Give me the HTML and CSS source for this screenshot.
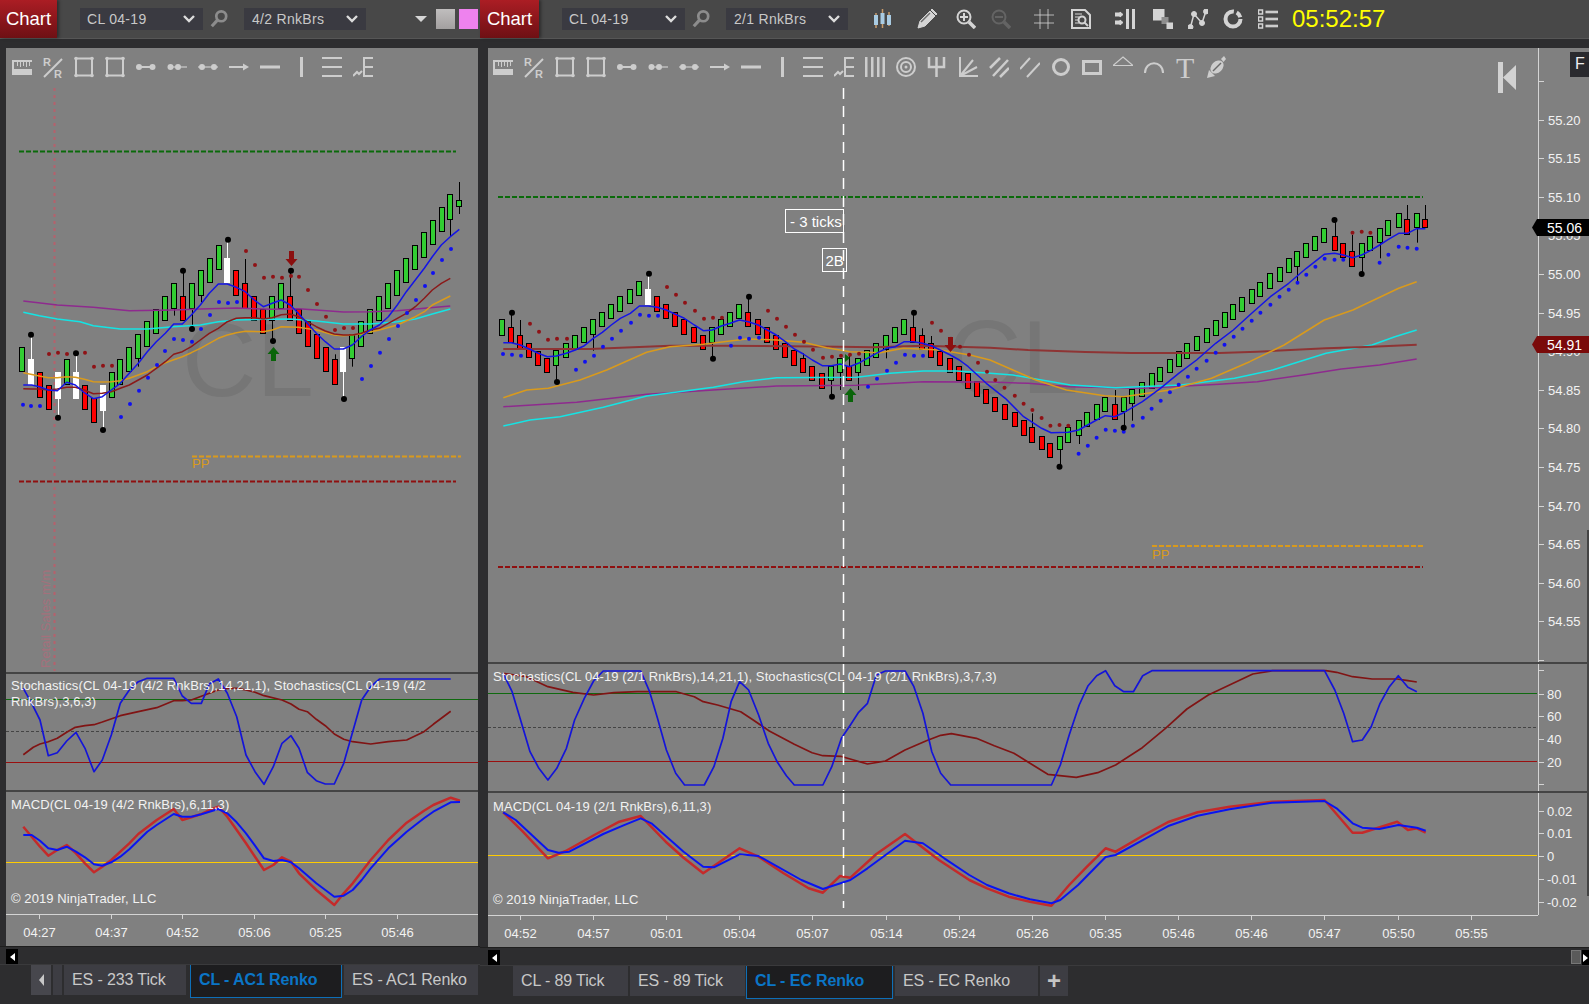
FILE: index.html

```html
<!DOCTYPE html>
<html lang="en">
<head>
  <meta charset="UTF-8" />
  <title>Chart</title>
  <link rel="stylesheet" href="styles.css">
</head>
<body>
  <svg class="defs" aria-hidden="true">
    <symbol id="t-ruler" viewBox="0 0 20 24"><path d="M0 5h20v2h-2v4h-1V7h-2v5h-1V7h-2v4h-1V7H9v5H8V7H6v4H5V7H2v7h18v6H0z"/></symbol>
    <symbol id="t-rect" viewBox="0 0 20 24"><rect x="2" y="3.500" width="16" height="17" class="st2"/><circle cx="2" cy="3.500" r="1.800"/><circle cx="18" cy="3.500" r="1.800"/><circle cx="2" cy="20.500" r="1.800"/><circle cx="18" cy="20.500" r="1.800"/></symbol>
    <symbol id="t-ray1" viewBox="0 0 20 24"><path d="M3 12h14" class="st2"/><circle cx="3" cy="12" r="3"/><circle cx="16.500" cy="12" r="3"/></symbol>
    <symbol id="t-ray2" viewBox="0 0 20 24"><path d="M3 12h17" class="st1"/><circle cx="3.500" cy="12" r="3"/><circle cx="11" cy="12" r="3"/></symbol>
    <symbol id="t-ray3" viewBox="0 0 20 24"><path d="M0 12h20" class="st1"/><circle cx="4" cy="12" r="3"/><circle cx="16" cy="12" r="3"/></symbol>
    <symbol id="t-arrow" viewBox="0 0 20 24"><path d="M0 12h16" class="st2"/><path d="M14 8.500 20 12l-6 3.500z"/></symbol>
    <symbol id="t-line" viewBox="0 0 20 24"><rect y="10.500" width="20" height="3"/></symbol>
    <symbol id="t-vert" viewBox="0 0 20 24"><rect x="9" y="2" width="3" height="20"/></symbol>
    <symbol id="t-lines" viewBox="0 0 20 24"><rect y="2" width="20" height="2"/><rect y="11" width="20" height="2"/><rect y="20" width="20" height="2"/></symbol>
    <symbol id="t-fib" viewBox="0 0 20 24"><path d="M11 3v18M10 3h10M10 12h10M10 21h10" class="st2"/><path d="M0 21l4-4 2 2 3-3" class="st2"/></symbol>
    <symbol id="t-bars" viewBox="0 0 20 24"><rect x="0" y="2" width="2.500" height="20"/><rect x="6" y="2" width="2.500" height="20"/><rect x="12" y="2" width="2.500" height="20"/><rect x="17.500" y="2" width="2.500" height="20"/></symbol>
    <symbol id="t-target" viewBox="0 0 20 24"><circle cx="10" cy="12" r="9" class="st2"/><circle cx="10" cy="12" r="5" class="st2"/><circle cx="10" cy="12" r="1.500"/></symbol>
    <symbol id="t-fork" viewBox="0 0 20 24"><path d="M2 2v10h15V2M9.500 2v20" class="st25"/></symbol>
    <symbol id="t-fan" viewBox="0 0 20 24"><path d="M2 2v19h18M2 21 15 5M2 21l17-9" class="st2"/></symbol>
    <symbol id="t-hatch" viewBox="0 0 20 24"><path d="M1 13 11 3M4 21 19 5M11 22 20 13" class="st25"/></symbol>
    <symbol id="t-slash" viewBox="0 0 20 24"><path d="M0 14 10 3M7 22 20 8" class="st2"/></symbol>
    <symbol id="t-circle" viewBox="0 0 20 24"><circle cx="10" cy="12" r="7.500" class="st3"/></symbol>
    <symbol id="t-box" viewBox="0 0 20 24"><rect x="1.500" y="6.500" width="17" height="12" class="st3"/></symbol>
    <symbol id="t-tri" viewBox="0 0 20 24"><path d="M10 2 20 10.500H0z" class="st1"/></symbol>
    <symbol id="t-arc" viewBox="0 0 20 24"><path d="M1 18C1 5 19 5 19 18" class="st2"/></symbol>
    <symbol id="t-brush" viewBox="0 0 20 24"><ellipse cx="11" cy="12" rx="7.500" ry="5.500" transform="rotate(-45 11 12)"/><path d="M1 23 3 15 9 21z"/><path d="M15 4 18 1 20 4 17.500 7z"/><path d="M7 16 15 8" class="st-bg"/></symbol>

    <symbol id="b-search" viewBox="0 0 20 20"><circle cx="12.500" cy="7" r="5.500" class="st3"/><path d="M8.500 11 2 18" class="st35"/></symbol>
    <symbol id="b-candles" viewBox="0 0 20 20"><path d="M3 4v15M9.500 0v19M16 3v14" class="st-wick"/><rect x="1" y="6" width="4" height="10" class="fill-blue"/><rect x="7.500" y="4" width="4" height="11" class="fill-blue"/><rect x="14" y="6" width="4" height="10" class="fill-blue"/></symbol>
    <symbol id="b-pencil" viewBox="0 0 20 20"><path d="M1 19 3 12 13 2 18 7 8 17zM15 0l5 5-1 1-5-5z"/><path d="M4 13 13 4" class="st-bg"/></symbol>
    <symbol id="b-plus" viewBox="0 0 20 20"><circle cx="8" cy="8" r="6.500" class="st2"/><path d="M8 4v8M4 8h8" class="st2"/><path d="M13 13l6 6" class="st35"/></symbol>
    <symbol id="b-minus" viewBox="0 0 20 20"><circle cx="8" cy="8" r="6.500" class="st2"/><path d="M4 8h8" class="st2"/><path d="M13 13l6 6" class="st35"/></symbol>
    <symbol id="b-grid" viewBox="0 0 20 20"><path d="M6 0v20M14 0v20M0 6h20M0 14h20" class="st-thin"/></symbol>
    <symbol id="b-doc" viewBox="0 0 20 20"><path d="M1 1h13l5 5v13H1z" class="st2"/><path d="M4 5h7M4 8h4M4 11h3M4 14h4" class="st1"/><circle cx="11" cy="11" r="3.500" class="st2"/><path d="M13.500 13.500 17 17" class="st2"/></symbol>
    <symbol id="b-split" viewBox="0 0 20 20"><rect x="0" y="4" width="5" height="3"/><rect x="0" y="12" width="5" height="3"/><path d="M5 3l3 2.500-3 2.500zM5 11l3 2.500-3 2.500z"/><rect x="11.500" y="0" width="2" height="20"/><rect x="17.500" y="0" width="2" height="20"/></symbol>
    <symbol id="b-layers" viewBox="0 0 20 20"><rect x="0" y="0" width="11" height="11"/><rect x="8.500" y="8" width="7" height="7" class="fill-dim"/><rect x="14" y="14" width="6" height="6"/></symbol>
    <symbol id="b-nodes" viewBox="0 0 20 20"><path d="M2.500 18 6 5l8 9 4-12" class="st15"/><circle cx="2.500" cy="18" r="2.500"/><circle cx="6" cy="5" r="2.500"/><circle cx="14" cy="14" r="2.500"/><circle cx="18" cy="2.500" r="2.500"/></symbol>
    <symbol id="b-ring" viewBox="0 0 20 20"><circle cx="10" cy="10" r="7.500" class="st4" stroke-dasharray="36 3 6 2"/></symbol>
    <symbol id="b-list" viewBox="0 0 20 20"><rect x="0.500" y="1" width="4" height="4" class="st15"/><rect x="0.500" y="8" width="4" height="4" class="st15"/><rect x="0.500" y="15" width="4" height="4" class="st15"/><rect x="8" y="2.200" width="12" height="1.600"/><rect x="8" y="9.200" width="12" height="1.600"/><rect x="8" y="16.200" width="12" height="1.600"/></symbol>
  </svg>

  <div class="windows">
    <section class="win win-left">
      <header class="topbar">
        <div class="chart-btn">Chart</div>
        <div class="combo combo-first">CL 04-19<svg class="chev" viewBox="0 0 12 8"><path d="M1 1l5 5 5-5"/></svg></div>
        <svg class="search"><use href="#b-search"/></svg>
        <div class="combo combo-second">4/2 RnkBrs<svg class="chev" viewBox="0 0 12 8"><path d="M1 1l5 5 5-5"/></svg></div>
        <div class="caret"></div>
        <div class="swatch swatch-grey"></div>
        <div class="swatch swatch-pink"></div>
      </header>
      <div class="chart">
        <div class="pane pane-main">
          <svg class="plot" id="left-main"></svg>
          <div class="tools">
            <svg class="tool"><use href="#t-ruler"/></svg>
            <svg class="tool" viewBox="0 0 20 24"><text x="0" y="11" class="sym-r">R</text><text x="11" y="23" class="sym-r">R</text><path d="M1 22 19 4" class="st2"/></svg>
            <svg class="tool"><use href="#t-rect"/></svg>
            <svg class="tool"><use href="#t-rect"/></svg>
            <svg class="tool"><use href="#t-ray1"/></svg>
            <svg class="tool"><use href="#t-ray2"/></svg>
            <svg class="tool"><use href="#t-ray3"/></svg>
            <svg class="tool"><use href="#t-arrow"/></svg>
            <svg class="tool"><use href="#t-line"/></svg>
            <svg class="tool"><use href="#t-vert"/></svg>
            <svg class="tool"><use href="#t-lines"/></svg>
            <svg class="tool"><use href="#t-fib"/></svg>
          </div>
        </div>
        <div class="pane pane-stoch">
          <svg class="plot" id="left-stoch"></svg>
          <div class="legend legend-wrap">Stochastics(CL 04-19 (4/2 RnkBrs),14,21,1), Stochastics(CL 04-19 (4/2 RnkBrs),3,6,3)</div>
        </div>
        <div class="pane pane-macd">
          <svg class="plot" id="left-macd"></svg>
          <div class="legend">MACD(CL 04-19 (4/2 RnkBrs),6,11,3)</div>
          <div class="copy">© 2019 NinjaTrader, LLC</div>
        </div>
        <div class="pane pane-time"><svg class="plot" id="left-time"></svg></div>
      </div>
      <div class="hbar"><div class="hbar-btn"><span class="tri-left"></span></div></div>
      <nav class="tabs">
        <div class="tab tab-arrow"><span class="tri-left"></span></div>
        <div class="tab tab-stub"></div>
        <div class="tab w122">ES - 233 Tick</div>
        <div class="tab active w152">CL - AC1 Renko</div>
        <div class="tab w134">ES - AC1 Renko</div>
      </nav>
    </section>

    <section class="win win-right">
      <header class="topbar">
        <div class="chart-btn">Chart</div>
        <div class="combo combo-first">CL 04-19<svg class="chev" viewBox="0 0 12 8"><path d="M1 1l5 5 5-5"/></svg></div>
        <svg class="search"><use href="#b-search"/></svg>
        <div class="combo combo-second">2/1 RnkBrs<svg class="chev" viewBox="0 0 12 8"><path d="M1 1l5 5 5-5"/></svg></div>
        <svg class="btn m25"><use href="#b-candles"/></svg>
        <svg class="btn m24"><use href="#b-pencil"/></svg>
        <svg class="btn m19"><use href="#b-plus"/></svg>
        <svg class="btn off"><use href="#b-minus"/></svg>
        <svg class="btn m23"><use href="#b-grid"/></svg>
        <svg class="btn m17"><use href="#b-doc"/></svg>
        <svg class="btn m24"><use href="#b-split"/></svg>
        <svg class="btn m18"><use href="#b-layers"/></svg>
        <svg class="btn"><use href="#b-nodes"/></svg>
        <svg class="btn"><use href="#b-ring"/></svg>
        <svg class="btn"><use href="#b-list"/></svg>
        <div class="clock">05:52:57</div>
      </header>
      <div class="chart">
        <div class="pane pane-main">
          <svg class="plot" id="right-main"></svg>
          <div class="tools">
            <svg class="tool"><use href="#t-ruler"/></svg>
            <svg class="tool" viewBox="0 0 20 24"><text x="0" y="11" class="sym-r">R</text><text x="11" y="23" class="sym-r">R</text><path d="M1 22 19 4" class="st2"/></svg>
            <svg class="tool"><use href="#t-rect"/></svg>
            <svg class="tool"><use href="#t-rect"/></svg>
            <svg class="tool"><use href="#t-ray1"/></svg>
            <svg class="tool"><use href="#t-ray2"/></svg>
            <svg class="tool"><use href="#t-ray3"/></svg>
            <svg class="tool"><use href="#t-arrow"/></svg>
            <svg class="tool"><use href="#t-line"/></svg>
            <svg class="tool"><use href="#t-vert"/></svg>
            <svg class="tool"><use href="#t-lines"/></svg>
            <svg class="tool"><use href="#t-fib"/></svg>
            <svg class="tool"><use href="#t-bars"/></svg>
            <svg class="tool"><use href="#t-target"/></svg>
            <svg class="tool"><use href="#t-fork"/></svg>
            <svg class="tool"><use href="#t-fan"/></svg>
            <svg class="tool"><use href="#t-hatch"/></svg>
            <svg class="tool"><use href="#t-slash"/></svg>
            <svg class="tool"><use href="#t-circle"/></svg>
            <svg class="tool"><use href="#t-box"/></svg>
            <svg class="tool"><use href="#t-tri"/></svg>
            <svg class="tool"><use href="#t-arc"/></svg>
            <svg class="tool" viewBox="0 0 20 24"><text x="1" y="23" class="sym-t">T</text></svg>
            <svg class="tool"><use href="#t-brush"/></svg>
          </div>
          <div class="fbox">F</div>
        </div>
        <div class="pane pane-stoch">
          <svg class="plot" id="right-stoch"></svg>
          <div class="legend">Stochastics(CL 04-19 (2/1 RnkBrs),14,21,1), Stochastics(CL 04-19 (2/1 RnkBrs),3,7,3)</div>
        </div>
        <div class="pane pane-macd">
          <svg class="plot" id="right-macd"></svg>
          <div class="legend">MACD(CL 04-19 (2/1 RnkBrs),6,11,3)</div>
          <div class="copy">© 2019 NinjaTrader, LLC</div>
        </div>
        <div class="pane pane-time"><svg class="plot" id="right-time"></svg></div>
      </div>
      <div class="hbar">
        <div class="hbar-btn"><span class="tri-left"></span></div>
        <div class="hbar-end"><div class="thumb"></div><div class="hbar-btn"><span class="tri-right"></span></div></div>
      </div>
      <nav class="tabs">
        <div class="tab w115">CL - 89 Tick</div>
        <div class="tab w115">ES - 89 Tick</div>
        <div class="tab active w147">CL - EC Renko</div>
        <div class="tab w143">ES - EC Renko</div>
        <div class="tab tab-plus">+</div>
      </nav>
    </section>
  </div>
  <script src="script.js"></script>
</body>
</html>
```

FILE: styles.css

```css
* {
  box-sizing: border-box;
}
html, body {
  margin: 0;
  height: 100%;
  overflow: hidden;
  background: #2d2d2f;
  font-family: "Liberation Sans", Arial, sans-serif;
  color: #c8c8c8;
}
.defs {
  position: absolute;
  width: 0;
  height: 0;
}
.windows {
  display: flex;
  width: 1589px;
}
.win-left {
  width: 480px;
}
.win-right {
  width: 1109px;
}

/* top bar */
.topbar {
  display: flex;
  align-items: center;
  height: 39px;
  background: #484848;
  border-bottom: 1px solid #565656;
}
.chart-btn {
  width: 57px;
  height: 38px;
  align-self: flex-start;
  padding-top: 8px;
  text-align: center;
  font-size: 18.5px;
  color: #fff;
  background: linear-gradient(to bottom, #ab1d24, #6e1014);
  box-shadow: 2px 0 3px rgba(0,0,0,0.4);
}
.win-right .chart-btn {
  width: 59px;
}
.combo {
  display: flex;
  align-items: center;
  justify-content: space-between;
  width: 123px;
  height: 22px;
  padding: 0 8px 0 7px;
  background: #3a3a41;
  font-size: 14px;
  letter-spacing: 0.3px;
}
.combo-first {
  margin-left: 23px;
}
.combo-second {
  margin-left: 16px;
  padding-left: 8px;
  width: 122px;
}
.chev {
  width: 12px;
  height: 8px;
  fill: none;
  stroke: #dcdcdc;
  stroke-width: 2.4;
}
.search {
  width: 18px;
  height: 18px;
  margin-left: 7px;
  color: #8c8c8c;
  fill: currentColor;
  stroke: currentColor;
}
.combo-second ~ .caret {
  width: 0;
  height: 0;
  margin-left: 49px;
  border: 6px solid transparent;
  border-top: 6px solid #d6d6d6;
  border-bottom: 0;
}
.swatch {
  width: 19px;
  height: 20px;
}
.swatch-grey {
  margin-left: 9px;
  background: linear-gradient(to bottom, #c0bebe, #a3a0a0);
}
.swatch-pink {
  margin-left: 4px;
  background: #ee82ee;
}
.btn {
  width: 20px;
  height: 20px;
  margin-left: 15px;
  color: #d4d4d4;
  fill: currentColor;
  stroke: currentColor;
}
.btn.off {
  color: #646464;
}
.m17 { margin-left: 17px; }
.m18 { margin-left: 18px; }
.m19 { margin-left: 19px; }
.m23 { margin-left: 23px; }
.m24 { margin-left: 24px; }
.m25 { margin-left: 25px; }
.clock {
  margin-left: 14px;
  font-size: 24px;
  color: #ffff00;
}

/* chart panes */
.chart {
  margin: 9px 0 0 6px;
  width: 472px;
}
.win-right .chart {
  margin-left: 8px;
  width: 1101px;
}
.pane {
  position: relative;
  background: #808080;
}
.pane + .pane {
  border-top: 2px solid #444;
}
.pane-time {
  height: 32px;
}
.pane + .pane-time {
  border-top: 0;
}
.win-left .pane-main { height: 624px; }
.win-left .pane-stoch { height: 118px; }
.win-left .pane-macd { height: 124px; }
.win-right .pane-main { height: 614px; }
.win-right .pane-stoch { height: 129px; }
.win-right .pane-macd { height: 124px; }
.plot {
  display: block;
  width: 100%;
  height: 100%;
}
.plot text {
  font-family: "Liberation Sans", Arial, sans-serif;
  font-size: 13px;
  fill: #f2f2f2;
}
.plot .mark {
  font-size: 15px;
  fill: #fff;
}
.plot .pp {
  fill: #d99a1c;
}
.plot .wm {
  font-size: 103px;
  fill: #767676;
}
.plot .news {
  fill: #a4707c;
}
.plot .tag {
  font-size: 14px;
  fill: #fff;
}
.tools {
  position: absolute;
  top: 7px;
  left: 6px;
  display: flex;
  gap: 11px;
  color: #cdcdcd;
  fill: currentColor;
}
.win-right .tools {
  left: 5px;
}
.tool {
  width: 20px;
  height: 24px;
}
.sym-r {
  font-size: 11px;
  font-weight: bold;
  font-family: "Liberation Sans", Arial, sans-serif;
}
.sym-t {
  font-size: 30px;
  font-family: "Liberation Serif", serif;
}
.st1, .st15, .st2, .st25, .st3, .st35, .st4, .st-bg, .st-wick, .st-thin {
  fill: none;
  stroke: currentColor;
}
.st-thin { stroke-width: 0.8; }
.st1 { stroke-width: 1.2; }
.st15 { stroke-width: 1.5; }
.st2 { stroke-width: 2; }
.st25 { stroke-width: 2.5; }
.st3 { stroke-width: 3; }
.st35 { stroke-width: 3.5; }
.st4 { stroke-width: 4; }
.st-bg {
  stroke: #6a6a6a;
  stroke-width: 1.5;
}
.st-wick {
  stroke: #c89a6a;
  stroke-width: 1.5;
}
.fill-blue {
  fill: #a9cbe2;
  stroke: none;
}
.fill-dim {
  fill: #8e8e8e;
  stroke: none;
}
.fbox {
  position: absolute;
  top: 4px;
  right: 0;
  width: 19px;
  height: 25px;
  padding: 3px 0 0 5px;
  background: #2a2a2e;
  color: #eee;
  font-size: 16px;
}
.legend {
  position: absolute;
  top: 5px;
  left: 5px;
  font-size: 13px;
  line-height: 16px;
  letter-spacing: 0.09px;
  color: #f2f2f2;
  white-space: nowrap;
}
.win-left .legend {
  top: 4px;
}
.win-left .pane-macd .legend {
  top: 5px;
}
.win-right .pane-macd .legend {
  top: 6px;
}
.legend-wrap {
  width: 425px;
  white-space: normal;
}
.copy {
  position: absolute;
  left: 5px;
  bottom: 7px;
  font-size: 13px;
  line-height: 16px;
  letter-spacing: 0.09px;
  color: #f2f2f2;
}

/* scrollbar and tabs */
.hbar {
  display: flex;
  justify-content: space-between;
  height: 19px;
  padding: 2px 0 1px 6px;
  border-top: 1px solid #1e1e1e;
  border-bottom: 1px solid #3a3a3c;
}
.win-right .hbar {
  padding-left: 8px;
}
.hbar-btn {
  display: flex;
  align-items: center;
  justify-content: center;
  width: 12px;
  height: 15px;
  background: #000;
}
.win-right .hbar-end .hbar-btn {
  width: 7px;
}
.hbar-end {
  display: flex;
  gap: 1px;
}
.thumb {
  width: 10px;
  background: #5a5a5a;
  border: 1px solid #777;
}
.tri-left, .tri-right {
  width: 0;
  height: 0;
  border: 4px solid transparent;
}
.tri-left {
  border-right: 5px solid #fff;
  border-left: 0;
}
.tri-right {
  border-left: 5px solid #fff;
  border-right: 0;
}
.tabs {
  display: flex;
  gap: 2px;
  height: 33px;
  padding-left: 31px;
}
.win-right .tabs {
  padding-left: 33px;
}
.tab {
  height: 30px;
  padding: 6px 0 0 8px;
  background: #3d3d43;
  font-size: 16px;
  letter-spacing: -0.12px;
}
.tab-arrow {
  display: flex;
  justify-content: center;
  align-items: center;
  width: 20px;
  padding: 0;
  background: #47474d;
}
.tab-arrow .tri-left {
  border-right-color: #c8c8c8;
  border-width: 6px 5px 6px 0;
}
.tab-stub {
  width: 9px;
  padding: 0;
}
.tab.active {
  height: 33px;
  margin-left: 2px;
  padding-left: 8px;
  font-weight: bold;
  color: #0b75c6;
  background: #1d1d1f;
  border: 1px solid #0e6fb8;
  border-top: 0;
}
.win-right .tab.active {
  margin-left: -1px;
}
.tab-plus {
  width: 28px;
  padding: 1px 0 0 0;
  text-align: center;
  font-size: 24px;
  font-weight: bold;
  color: #c4c4c4;
}
.w115 { width: 115px; }
.w122 { width: 122px; }
.w134 { width: 134px; }
.w143 { width: 143px; }
.w147 { width: 147px; }
.w152 { width: 152px; }
```

FILE: script.js

```js
// crop origin + scale the points were read at, mapped back to page coords
const Z6 = [0, 170, 3, 3], Z7 = [490, 200, 3, 3], Z8 = [990, 190, 2.618, 3];
const Z9 = [0, 660, 3, 3], Z10 = [480, 655, 2.8, 3], Z11 = [1030, 655, 2.805, 3];

const GREEN = '#32cd32', RED = '#ff0000', BLUE = '#1414e6', DKRED = '#8b1a1a';
const ORANGE = '#d99a1c', CYAN = '#14e4e4', PURPLE = '#8e2a8e', MRED = '#c42a2a';

function pts(s, z) {
  return s.trim().split(/\s+/).map(p => {
    const [x, y] = p.split(',').map(Number);
    return [z[0] + x / z[2], z[1] + y / z[3]];
  });
}
function line(p, color, w) {
  const d = p.map(q => q[0].toFixed(1) + ',' + q[1].toFixed(1)).join(' ');
  return `<polyline points="${d}" fill="none" stroke="${color}" stroke-width="${w}" stroke-linejoin="round"/>`;
}
function dots(p, color, r) {
  return p.map(q => `<circle cx="${q[0].toFixed(1)}" cy="${q[1].toFixed(1)}" r="${r}" fill="${color}"/>`).join('');
}
function hline(x1, x2, y, color, dash, w) {
  return `<line x1="${x1}" x2="${x2}" y1="${y}" y2="${y}" stroke="${color}" stroke-width="${w || 1}" ${dash ? `stroke-dasharray="${dash}"` : ''}/>`;
}
function vline(x, y1, y2, color, dash, w) {
  return `<line x1="${x}" x2="${x}" y1="${y1}" y2="${y2}" stroke="${color}" stroke-width="${w || 1}" ${dash ? `stroke-dasharray="${dash}"` : ''}/>`;
}
function text(x, y, s, cls, anchor) {
  return `<text x="${x}" y="${y}" ${cls ? `class="${cls}"` : ''} ${anchor ? `text-anchor="${anchor}"` : ''}>${s}</text>`;
}

// c = [x, type, top, bottom, wick, wick2]
function candles(list, z) {
  const fills = { G: GREEN, R: RED, W: '#ffffff' };
  return list.map(c => {
    const x = Math.round(z[0] + c[0] / z[2]);
    const top = Math.round(z[1] + c[2] / z[3]) + 0.5;
    const bot = Math.round(z[1] + c[3] / z[3]) - 0.5;
    const wc = c[1] === 'W' ? '#ffffff' : '#000000';
    let out = '';
    if (c[4] !== undefined) {
      const wy = z[1] + c[4] / z[3];
      out += vline(x + 0.5, wy < top ? wy : bot, wy < top ? top : wy, wc);
    }
    if (c[5] !== undefined) {
      out += vline(x + 0.5, bot, z[1] + c[5] / z[3], wc);
    }
    if (c[1] === 'W') {
      out += `<rect x="${x - 3}" y="${top - 0.5}" width="6" height="${bot - top + 1}" fill="#fff"/>`;
    } else {
      out += `<rect x="${x - 2.5}" y="${top}" width="5" height="${bot - top}" fill="${fills[c[1]]}" stroke="#000"/>`;
    }
    return out;
  }).join('');
}
function upArrow(x, y, color) {
  return `<path d="M${x - 2.5} ${y + 14}v-7h-3.500l6-7 6 7h-3.500v7z" transform="translate(0.5 0)" fill="${color}"/>`;
}
function downArrow(x, y, color) {
  return `<path d="M${x - 2} ${y}h5v8h3.500l-6 7-6-7h3.500z" fill="${color}"/>`;
}
function put(id, x, y, w, h, body) {
  const el = document.getElementById(id);
  el.setAttribute('viewBox', `${x} ${y} ${w} ${h}`);
  el.innerHTML = body;
}

/* ---------- left chart ---------- */
const leftBars = [
  ['G',532,607],['W',568,645,494],['R',607,685],['R',646,721],['W',606,686,743],['G',568,646],['W',606,686,550],
  ['R',646,721],['R',685,760],['W',645,722,780],['G',607,685],['G',568,646],['G',532,607],['G',493,568,590],
  ['G',454,532],['G',418,493],['G',379,454],['G',340,418,437],['R',379,454,302],['G',340,418,477],['G',301,379,397],
  ['G',265,340],['G',226,301],['W',264,340,209],['R',301,379],['R',340,418,267],['R',379,454],['R',418,493],
  ['G',379,454,513],['G',340,418],['R',379,454,302],['R',418,493],['R',454,532],['R',493,568],['R',532,607],
  ['R',568,646,553],['W',532,607,687],['G',493,568,590],['G',454,532],['G',418,493],['G',379,454],['G',340,418],
  ['G',301,379],['G',265,340],['G',226,301],['G',187,265],['G',151,226],['G',112,187],['G',73,151,200],['G',91,112,36,132]
].map((c, i) => [67 + 26.76 * i].concat(c));

const leftMain = [
  text(182, 396, 'CL', 'wm'),
  vline(54.5, 88, 671, '#b5616c', '3 4', 2),
  `<text transform="translate(50 668) rotate(-90)" class="news">Retail Sales m/m</text>`,
  hline(19, 456, 151.5, '#0a6a0a', '5 2', 2),
  hline(19, 456, 481.5, '#8f0f0f', '5 2', 2),
  hline(192, 461, 456.5, ORANGE, '5 2', 2),
  text(192, 468, 'PP', 'pp'),
  candles(leftBars, Z6),
  line(pts('70,393 172,405 280,412 388,422 520,420 601,417 709,414 817,418 895,416 949,420 1030,426 1111,425 1192,422 1273,415 1351,408', Z6), PURPLE, 1.5),
  line(pts('70,427 118,437 172,447 240,455 280,467 361,477 442,477 520,470 601,465 655,455 709,450 790,448 871,447 949,453 1030,462 1111,462 1192,455 1246,447 1297,432 1351,417', Z6), CYAN, 1.5),
  line(pts('70,608 118,618 145,623 172,623 200,620 226,622 253,628 280,635 307,636 334,635 361,632 388,625 442,605 469,590 496,578 547,560 574,548 601,535 628,520 655,505 682,495 709,488 736,484 790,485 817,480 844,470 895,472 949,480 1003,495 1030,497 1084,492 1138,480 1192,465 1246,440 1273,425 1297,405 1351,378', Z6), ORANGE, 1.5),
  line(pts('70,656 95,657 118,657 145,660 172,657 200,652 226,652 253,660 280,671 307,670 334,665 361,655 388,645 415,630 442,615 469,595 496,575 521,553 547,545 574,530 601,510 628,490 655,475 682,455 709,445 736,443 763,443 790,447 817,443 844,434 871,432 895,440 922,455 949,470 976,483 1003,492 1030,495 1057,495 1084,490 1111,480 1138,475 1165,460 1192,445 1219,430 1246,410 1273,385 1297,360 1324,340 1351,325', Z6), DKRED, 1.5),
  line(pts('70,645 95,645 118,650 145,660 172,662 200,637 226,645 253,668 280,686 307,680 334,660 361,640 388,610 415,580 442,545 469,515 496,490 521,462 547,462 574,435 601,405 628,370 655,342 682,342 709,352 736,365 763,390 790,410 817,400 844,390 871,405 895,430 922,460 949,490 976,515 1003,537 1030,537 1057,525 1084,500 1111,480 1138,465 1165,440 1192,405 1219,365 1246,330 1273,295 1297,260 1324,225 1351,200 1378,178', Z6), BLUE, 1.5),
  dots(pts('147,552 174,548 201,552 228,548 255,548 282,590 309,587 336,587 738,243 765,285 792,323 819,320 846,323 873,318 897,320 924,360 951,402 978,440 1005,480 1032,474 1059,474', Z6), '#8f1216', 2),
  dots(pts('69,704 93,708 120,708 363,741 390,702 417,662 444,623 471,585 495,543 522,507 549,510 576,515 603,477 630,435 657,396 684,399 711,396 1086,627 1113,588 1140,548 1167,507 1194,468 1221,429 1248,390 1275,348 1299,309 1326,270 1353,237', Z6), '#1010f0', 2),
  dots(pts('93,494 174,743 228,550 309,780 549,302 576,477 684,209 819,513 873,302 1032,687', Z6), '#000', 3),
  downArrow(291, 251, '#8b0f0f'),
  upArrow(273, 347, '#0a640a')
].join('');
put('left-main', 6, 48, 472, 624, leftMain);

const leftStoch = [
  hline(6, 478, 699.5, '#0f6a0f'),
  hline(6, 478, 731.5, '#444', '3 2'),
  hline(6, 478, 762.5, '#9a0f0f'),
  line(pts('70,284 100,262 120,252 145,245 172,235 200,217 226,202 255,197 282,194 307,186 361,167 415,155 470,143 521,122 547,122 574,120 628,100 655,90 682,85 710,85 738,90 765,97 792,107 846,120 873,132 897,148 922,155 949,178 976,197 1003,222 1031,238 1058,245 1112,252 1165,245 1220,240 1245,228 1272,215 1300,193 1352,154', Z9), '#801414', 1.7),
  line(pts('70,85 95,130 120,180 145,287 172,278 200,243 228,217 255,265 282,335 307,300 334,225 361,130 388,90 415,65 442,55 521,55 547,108 574,130 604,130 628,72 655,57 682,100 710,170 738,285 765,335 792,373 820,320 846,250 873,227 897,265 922,337 949,362 976,372 1003,372 1031,310 1058,215 1085,120 1112,80 1139,57 1352,57', Z9), '#1414d8', 1.7)
].join('');
put('left-stoch', 6, 674, 472, 116, leftStoch);

const leftMacd = [
  hline(6, 478, 862.5, '#ffcc00'),
  line(pts('70,500 95,530 120,560 145,587 172,570 200,555 228,580 255,610 282,637 307,620 334,600 388,550 415,522 470,480 521,447 547,480 574,472 604,462 628,450 655,440 682,470 710,510 738,550 765,590 792,630 820,615 846,592 873,605 897,640 949,690 1003,735 1031,700 1058,670 1112,600 1165,540 1220,488 1272,452 1300,435 1352,413 1380,422', Z9), MRED, 2.5),
  line(pts('70,525 95,525 120,542 145,565 172,570 200,560 228,575 255,592 282,613 307,617 334,607 361,590 388,568 442,515 470,495 521,462 547,470 574,470 604,463 655,447 682,460 710,487 738,520 765,557 792,595 820,603 846,600 873,607 897,625 949,670 1003,710 1031,707 1058,690 1085,660 1112,625 1165,565 1220,515 1272,475 1300,455 1352,427 1380,426', Z9), '#0a14f0', 2)
].join('');
put('left-macd', 6, 792, 472, 122, leftMacd);

function timeAxis(ticks, labels, xEnd, y) {
  let out = hline(0, xEnd, y + 0.5, '#d4d4d4');
  ticks.forEach((x, i) => {
    out += vline(x, y, y + 5, '#d4d4d4');
    out += text(x, y + 23, labels[i], '', 'middle');
  });
  return out;
}
put('left-time', 6, 914, 472, 32,
  timeAxis([39.5, 111.5, 182.5, 254.5, 325.5, 397.5], ['04:27', '04:37', '04:52', '05:06', '05:25', '05:46'], 478, 914));

/* ---------- right chart ---------- */
const rightBarsA = [
  [37,'G',358,407],[64,'R',382,428,338],[91,'R',406,451,360],[118,'R',430,475],[145,'R',452,498],[172,'R',475,520],
  [199,'G',451,498,546],[229,'G',430,475],[256,'G',406,451],[283,'G',382,430],[310,'G',358,406,452],[337,'G',337,382],
  [364,'G',313,358],[391,'G',289,337],[421,'G',268,313],[448,'G',244,289],[475,'W',268,315,221],[502,'R',289,337],
  [529,'R',313,358],[556,'R',337,382],[583,'R',358,406],[613,'R',382,430],[640,'R',406,451],[667,'G',382,430,476],
  [694,'G',358,406],[721,'G',337,382],[748,'G',313,358],[775,'R',337,382,290],[805,'R',358,406],[832,'R',382,430],
  [859,'R',406,451],[886,'R',430,475],[913,'R',451,498],[940,'R',475,520,460],[967,'R',498,544],[997,'R',520,568],
  [1024,'G',498,544,590],[1051,'G',475,520,570],[1078,'R',498,544,465],[1105,'G',475,520,570],[1132,'G',451,498],
  [1159,'G',430,475],[1189,'G',406,451,475],[1216,'G',382,430],[1243,'G',358,406],[1270,'R',382,430,338],
  [1297,'R',406,451,385],[1324,'R',430,475,408],[1351,'R',452,498],[1381,'R',475,520],[1408,'R',498,544],
  [1435,'R',520,568],[1462,'R',544,590],[1489,'R',568,612]
];
const rightBarsB = [
  [14,'R',620,667],[38,'R',643,691],[65,'R',667,712],[88,'R',691,737],[111,'R',712,760,670],[135,'R',737,780],[158,'R',760,805],
  [182,'G',737,780,830],[205,'G',712,760],[232,'G',691,737,762],[255,'G',667,712],[279,'G',643,691],[302,'G',620,667],
  [326,'R',643,691,600],[350,'G',620,667,713],[373,'G',598,643,692],[399,'G',575,620],[423,'G',550,598],[446,'G',530,575],
  [470,'G',506,550],[494,'G',482,530],[517,'G',460,506],[541,'G',437,482],[567,'G',413,460],[591,'G',389,437],[614,'G',367,413],
  [637,'G',343,389],[661,'G',320,367],[685,'G',298,343],[708,'G',275,320],[734,'G',250,298],[758,'G',230,275],[782,'G',205,250],
  [805,'G',182,230,275],[828,'G',158,205],[852,'G',137,182],[875,'G',113,158],[902,'R',137,182,90],[925,'R',158,205],
  [949,'R',182,230,135],[973,'G',158,205,252],[996,'G',137,182],[1020,'G',113,158,205],[1043,'G',90,137],[1070,'G',68,113],
  [1093,'R',88,135,45],[1117,'G',68,113,158],[1140,'R',88,113,45]
];

const priceY = p => 119.5 + (55.2 - p) / 0.05 * 38.6;
let priceAxis = vline(1538.5, 48, 662, '#d4d4d4');
for (let i = 0; i <= 15; i++) {
  const p = 55.25 - i * 0.05;
  const y = Math.round(priceY(p)) + 0.5;
  priceAxis += hline(1538, 1544, y, '#d4d4d4');
  if (i > 0 && i < 15) priceAxis += text(1548, y + 4, p.toFixed(2));
}

const rightMain = [
  text(947, 393, 'CL', 'wm'),
  hline(498, 1423, 197, '#0a6a0a', '5 2', 2),
  hline(498, 1423, 567, '#8f0f0f', '5 2', 2),
  hline(1152, 1425, 546, ORANGE, '5 2', 2),
  text(1152, 559, 'PP', 'pp'),
  candles(rightBarsA, Z7),
  candles(rightBarsB, Z8),
  line(pts('40,620 260,607 470,583 670,570 860,558 1100,556 1300,545 1500,546', Z7).concat(pts('100,580 210,590 400,595 600,583 700,575 820,555 920,537 1020,525 1117,507', Z8)), PURPLE, 1.5),
  line(pts('40,678 120,660 210,650 340,622 470,588 670,562 760,545 860,533 1100,532 1200,520 1300,513 1400,513 1500,520', Z7).concat(pts('60,555 210,585 330,593 500,585 640,565 740,540 880,490 1000,465 1060,440 1117,420', Z8)), CYAN, 1.5),
  line(pts('40,447 300,447 540,437 700,437 1050,440 1150,442 1300,437 1500,443', Z7).concat(pts('100,480 250,486 370,489 600,489 700,485 880,475 1000,470 1117,464', Z8)), '#8e3434', 2),
  line(pts('40,593 110,570 175,565 270,540 350,510 470,457 540,440 640,433 770,417 860,420 940,427 1010,443 1080,455 1170,458 1240,445 1350,450 1440,465 1500,480', Z7).concat(pts('60,540 120,570 200,600 300,617 350,620 470,600 580,565 680,515 770,465 875,390 950,360 1070,295 1117,275', Z8)), ORANGE, 1.5),
  line(pts('40,428 64,428 91,435 118,447 145,460 172,470 199,468 229,460 256,450 283,437 310,415 337,397 364,375 391,355 421,340 448,318 475,318 502,322 529,330 556,343 583,355 613,375 640,392 667,390 694,378 721,370 748,360 775,365 805,375 832,390 859,405 886,425 913,447 940,462 967,480 997,497 1024,497 1051,492 1078,500 1105,490 1132,475 1159,460 1189,445 1216,440 1243,425 1270,425 1297,430 1324,437 1351,450 1381,465 1408,480 1435,500 1462,525 1489,550', Z7).concat(pts('40,625 88,680 135,715 160,728 205,727 232,720 279,690 302,677 326,680 350,668 399,635 446,595 494,550 541,510 591,460 637,420 685,370 734,320 782,280 828,235 875,193 902,190 925,195 949,203 973,195 996,182 1020,165 1043,148 1070,130 1093,130 1117,116 1140,116', Z8)), BLUE, 1.5),
  dots(pts('120,371 147,395 174,419 201,416 231,416 531,261 558,284 585,308 615,332 642,356 669,353 696,353 834,332 861,356 888,380 915,404 942,425 969,449 999,473 1026,470 1053,467 1080,464 1107,461 1326,368 1353,392 1383,416 1410,440 1437,464 1464,488 1491,515', Z7).concat(pts('14,570 38,593 65,617 88,641 111,660 135,684 158,707 182,705 205,707 949,128 973,125 996,128', Z8)), '#8f1216', 2),
  dots(pts('39,462 66,464 93,467 258,509 285,485 312,467 339,440 366,416 393,392 423,368 450,344 477,347 504,347 723,437 750,413 777,416 807,413 1134,560 1161,536 1191,512 1218,488 1245,464 1272,467 1299,467', Z7).concat(pts('232,791 256,767 279,743 303,719 327,722 350,725 374,707 400,683 423,656 447,632 471,607 494,584 518,560 541,536 567,512 591,488 614,464 638,440 661,416 685,392 708,368 734,344 758,320 782,299 805,278 828,254 852,230 876,206 902,209 925,209 1020,218 1043,194 1070,170 1093,173 1117,176', Z8)), '#1010f0', 2),
  dots(pts('66,338 201,546 477,221 669,476 777,290 1026,590 1272,338', Z7).concat(pts('182,830 350,713 902,90 973,252', Z8)), '#000', 3),
  upArrow(850, 388, '#0a640a'),
  downArrow(950, 337, '#8b0f0f'),
  `<path d="M845 354l5 4-5 4z" fill="#0a640a"/>`,
  vline(843.5, 88, 662, '#fff', '11 7', 1.5),
  `<rect x="785.5" y="209.5" width="58" height="23" fill="none" stroke="#fff"/>`,
  text(790, 227, '- 3 ticks', 'mark'),
  `<rect x="822.500" y="248.5" width="24" height="23" fill="none" stroke="#fff"/>`,
  text(825.5, 266, '2B', 'mark'),
  `<path d="M1498 62h5v31h-5zM1516 65v25l-13-12.500z" fill="#d2d2d2"/>`,
  priceAxis,
  `<path d="M1537 219h52v17h-52l-5-8.500z" fill="#000"/>`,
  text(1547, 233, '55.06', 'tag'),
  `<path d="M1537 336h52v17h-52l-5-8.500z" fill="#7a0a0a"/>`,
  text(1547, 350, '54.91', 'tag'),
  `<rect x="1587" y="530" width="2" height="132" fill="#444"/>`
].join('');
put('right-main', 488, 48, 1101, 614, rightMain);

function rightAxis(y1, y2, rows) {
  let out = vline(1538.5, y1, y2, '#d4d4d4');
  rows.forEach(r => {
    out += hline(1538, 1544, r[0] + 0.5, '#d4d4d4');
    if (r[1]) out += text(1547, r[0] + 5, r[1]);
  });
  return out;
}
const rightStoch = [
  hline(488, 1537, 693.5, '#0f6a0f'),
  hline(488, 1537, 727.5, '#444', '3 2'),
  hline(488, 1537, 761.5, '#9a0f0f'),
  line(pts('65,55 130,65 190,95 260,112 318,120 375,113 440,110 550,110 600,125 625,140 665,150 730,170 765,195 810,228 880,268 930,293 960,302 1010,304 1085,327 1135,318 1190,285 1250,257 1290,241 1320,236 1390,250 1440,272 1495,295', Z10).concat(pts('0,325 50,358 130,367 190,353 240,330 315,278 380,220 440,162 500,120 570,85 625,57 680,47 830,47 860,52 905,65 960,72 1030,72 1060,77 1085,81', Z11)), '#801414', 1.7),
  line(pts('65,55 90,110 115,200 140,290 165,340 190,375 215,340 242,280 265,195 292,130 318,78 345,48 450,48 475,110 497,190 522,285 548,355 573,390 628,390 655,335 680,250 703,140 727,80 752,105 780,180 807,265 832,320 858,362 880,390 960,390 985,335 1012,250 1037,210 1060,172 1085,145 1110,60 1135,48 1190,48 1215,95 1240,175 1265,290 1290,355 1318,390', Z10).concat(pts('60,390 85,330 110,240 138,150 163,92 187,62 212,47 238,92 263,110 290,110 316,62 342,47 826,47 855,105 880,175 905,260 932,255 957,215 982,145 1008,95 1033,62 1060,97 1085,110', Z11)), '#1414d8', 1.7),
  vline(843.5, 664, 791, '#fff', '11 7', 1.5),
  rightAxis(664, 791, [[670], [694, '80'], [716, '60'], [739, '40'], [762, '20'], [784]]),
  `<rect x="1587" y="664" width="2" height="127" fill="#444"/>`
].join('');
put('right-stoch', 488, 664, 1101, 127, rightStoch);

const rightMacd = [
  hline(488, 1537, 855.5, '#ffcc00'),
  line(pts('65,472 120,530 190,610 240,588 320,540 390,500 450,483 520,560 570,608 625,655 727,580 780,605 850,655 920,700 960,713 1008,663 1037,668 1110,597 1190,537 1285,615 1370,675 1420,700 1480,725', Z10).concat(pts('0,740 60,752 110,690 160,635 212,580 240,590 320,540 390,500 470,472 560,455 680,440 826,435 905,533 932,533 1030,500 1060,525 1085,520 1110,533', Z11)), MRED, 2.5),
  line(pts('65,472 100,495 190,585 220,593 250,590 345,537 400,512 450,490 480,505 570,590 625,635 655,637 727,598 780,603 900,675 960,702 1037,675 1085,640 1190,557 1240,565 1300,610 1370,660 1420,690 1480,715', Z10).concat(pts('0,733 60,745 85,735 135,690 212,606 240,600 320,553 390,512 470,482 560,463 680,443 826,438 860,460 905,505 932,518 980,522 1033,510 1085,518 1110,527', Z11)), '#0a14f0', 2),
  vline(843.5, 793, 908, '#fff', '11 7', 1.5),
  rightAxis(793, 915, [[811, '0.02'], [833, '0.01'], [856, '0'], [879, '-0.01'], [902, '-0.02']]),
  `<rect x="1587" y="793" width="2" height="103" fill="#444"/>`
].join('');
put('right-macd', 488, 793, 1101, 122, rightMacd);

put('right-time', 488, 915, 1101, 32,
  timeAxis([520.5, 593.5, 666.5, 739.5, 812.5, 886.5, 959.5, 1032.5, 1105.5, 1178.5, 1251.5, 1324.5, 1398.5, 1471.5],
    ['04:52', '04:57', '05:01', '05:04', '05:07', '05:14', '05:24', '05:26', '05:35', '05:46', '05:46', '05:47', '05:50', '05:55'], 1538, 915));
```
